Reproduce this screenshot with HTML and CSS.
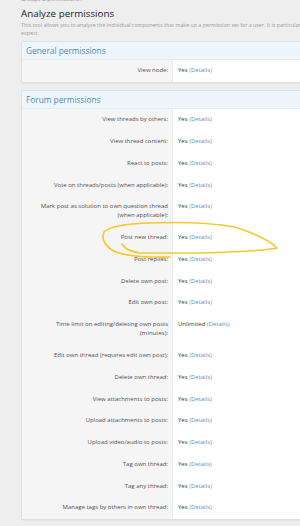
FILE: index.html
```html
<!DOCTYPE html>
<html>
  <head>
    <title>Analyze permissions</title>
    <link rel="stylesheet" href="styles.css">
  </head>
  <body>
    <div class="page">
      <div class="breadcrumb">Groups &amp; permissions <span class="crumb-arrow">&rsaquo;</span></div>
      <h1>Analyze permissions</h1>
      <p class="explain">This tool allows you to analyze the individual components that make up a permission set for a user. It is particularly useful for finding out why a user has or does not have a permission you would<br>expect.</p>

      <div class="block">
        <h2 class="block-header">General permissions</h2>
        <dl class="perm-row">
          <dt>View node:</dt>
          <dd>Yes <a href="#">(Details)</a></dd>
        </dl>
      </div>

      <div class="block">
        <h2 class="block-header">Forum permissions</h2>
        <dl class="perm-row">
          <dt>View threads by others:</dt>
          <dd>Yes <a href="#">(Details)</a></dd>
        </dl>
        <dl class="perm-row">
          <dt>View thread content:</dt>
          <dd>Yes <a href="#">(Details)</a></dd>
        </dl>
        <dl class="perm-row">
          <dt>React to posts:</dt>
          <dd>Yes <a href="#">(Details)</a></dd>
        </dl>
        <dl class="perm-row">
          <dt>Vote on threads/posts (when applicable):</dt>
          <dd>Yes <a href="#">(Details)</a></dd>
        </dl>
        <dl class="perm-row">
          <dt>Mark post as solution to own question thread (when applicable):</dt>
          <dd>Yes <a href="#">(Details)</a></dd>
        </dl>
        <dl class="perm-row">
          <dt>Post new thread:</dt>
          <dd>Yes <a href="#">(Details)</a></dd>
        </dl>
        <dl class="perm-row">
          <dt>Post replies:</dt>
          <dd>Yes <a href="#">(Details)</a></dd>
        </dl>
        <dl class="perm-row">
          <dt>Delete own post:</dt>
          <dd>Yes <a href="#">(Details)</a></dd>
        </dl>
        <dl class="perm-row">
          <dt>Edit own post:</dt>
          <dd>Yes <a href="#">(Details)</a></dd>
        </dl>
        <dl class="perm-row">
          <dt>Time limit on editing/deleting own posts (minutes):</dt>
          <dd>Unlimited <a href="#">(Details)</a></dd>
        </dl>
        <dl class="perm-row">
          <dt>Edit own thread (requires edit own post):</dt>
          <dd>Yes <a href="#">(Details)</a></dd>
        </dl>
        <dl class="perm-row">
          <dt>Delete own thread:</dt>
          <dd>Yes <a href="#">(Details)</a></dd>
        </dl>
        <dl class="perm-row">
          <dt>View attachments to posts:</dt>
          <dd>Yes <a href="#">(Details)</a></dd>
        </dl>
        <dl class="perm-row">
          <dt>Upload attachments to posts:</dt>
          <dd>Yes <a href="#">(Details)</a></dd>
        </dl>
        <dl class="perm-row">
          <dt>Upload video/audio to posts:</dt>
          <dd>Yes <a href="#">(Details)</a></dd>
        </dl>
        <dl class="perm-row">
          <dt>Tag own thread:</dt>
          <dd>Yes <a href="#">(Details)</a></dd>
        </dl>
        <dl class="perm-row">
          <dt>Tag any thread:</dt>
          <dd>Yes <a href="#">(Details)</a></dd>
        </dl>
        <dl class="perm-row">
          <dt>Manage tags by others in own thread:</dt>
          <dd>Yes <a href="#">(Details)</a></dd>
        </dl>
      </div>
    </div>

    <!-- hand-drawn highlight around "Post new thread" -->
    <svg class="scribble" width="300" height="526" viewBox="0 0 300 526">
      <path d="M122 244 Q126 251 140 253 L200 253 Q265 251 277 248 Q268 238 235 227 Q200 221 150 223 Q112 224 104 232 Q100 242 112 250 Q125 258 170 257" />
    </svg>
  </body>
</html>
```

FILE: styles.css
```css
html,
body {
  overflow: hidden;
}
body {
  margin: 0;
  background-color: #eeeeee;
  font-family: "Open Sans", Arial, sans-serif;
  color: #505050;
}
.page {
  width: 400px;
  padding-left: 21px;
}
.breadcrumb {
  margin-top: -5px;
  height: 8px;
  font-size: 5.6px;
  line-height: 8px;
  color: #8a8a8a;
}
h1 {
  margin: 5px 0 0;
  font-size: 9.8px;
  line-height: 12px;
  font-weight: 400;
  color: #222222;
}
.explain {
  margin: 1px 0 4px;
  font-size: 5.3px;
  line-height: 8px;
  color: #9a9a9a;
  white-space: nowrap;
}
.block {
  margin-bottom: 7px;
  border: 1px solid #e0e0e0;
  border-radius: 2px;
  background-color: #ffffff;
  box-shadow: 0 1px 1px rgba(0, 0, 0, 0.04);
  overflow: hidden;
}
.block-header {
  margin: 0;
  height: 17px;
  padding-left: 4px;
  font-size: 8.3px;
  line-height: 17px;
  font-weight: 400;
  color: #4d8ab8;
  background-color: #eef6fc;
  border-bottom: 1px solid #e3ebf1;
}
.perm-row {
  display: flex;
  margin: 0;
}
.perm-row dt {
  flex: 0 0 151px;
  box-sizing: border-box;
  padding: 6.4px 4px 6.4px 12px;
  text-align: right;
  font-size: 6px;
  line-height: 9px;
  background-color: #f5f5f5;
  border-right: 1px solid #ececec;
}
.perm-row dd {
  flex: 1;
  margin: 0;
  padding: 6.4px 5px;
  font-size: 6px;
  line-height: 9px;
  color: #333333;
}
.perm-row dd a {
  color: #5c8fb9;
  text-decoration: none;
}
.scribble {
  position: absolute;
  top: 0;
  left: 0;
  pointer-events: none;
}
.scribble path {
  fill: none;
  stroke: #f4c92a;
  stroke-width: 1.6;
  stroke-linecap: round;
  stroke-linejoin: round;
}
```
